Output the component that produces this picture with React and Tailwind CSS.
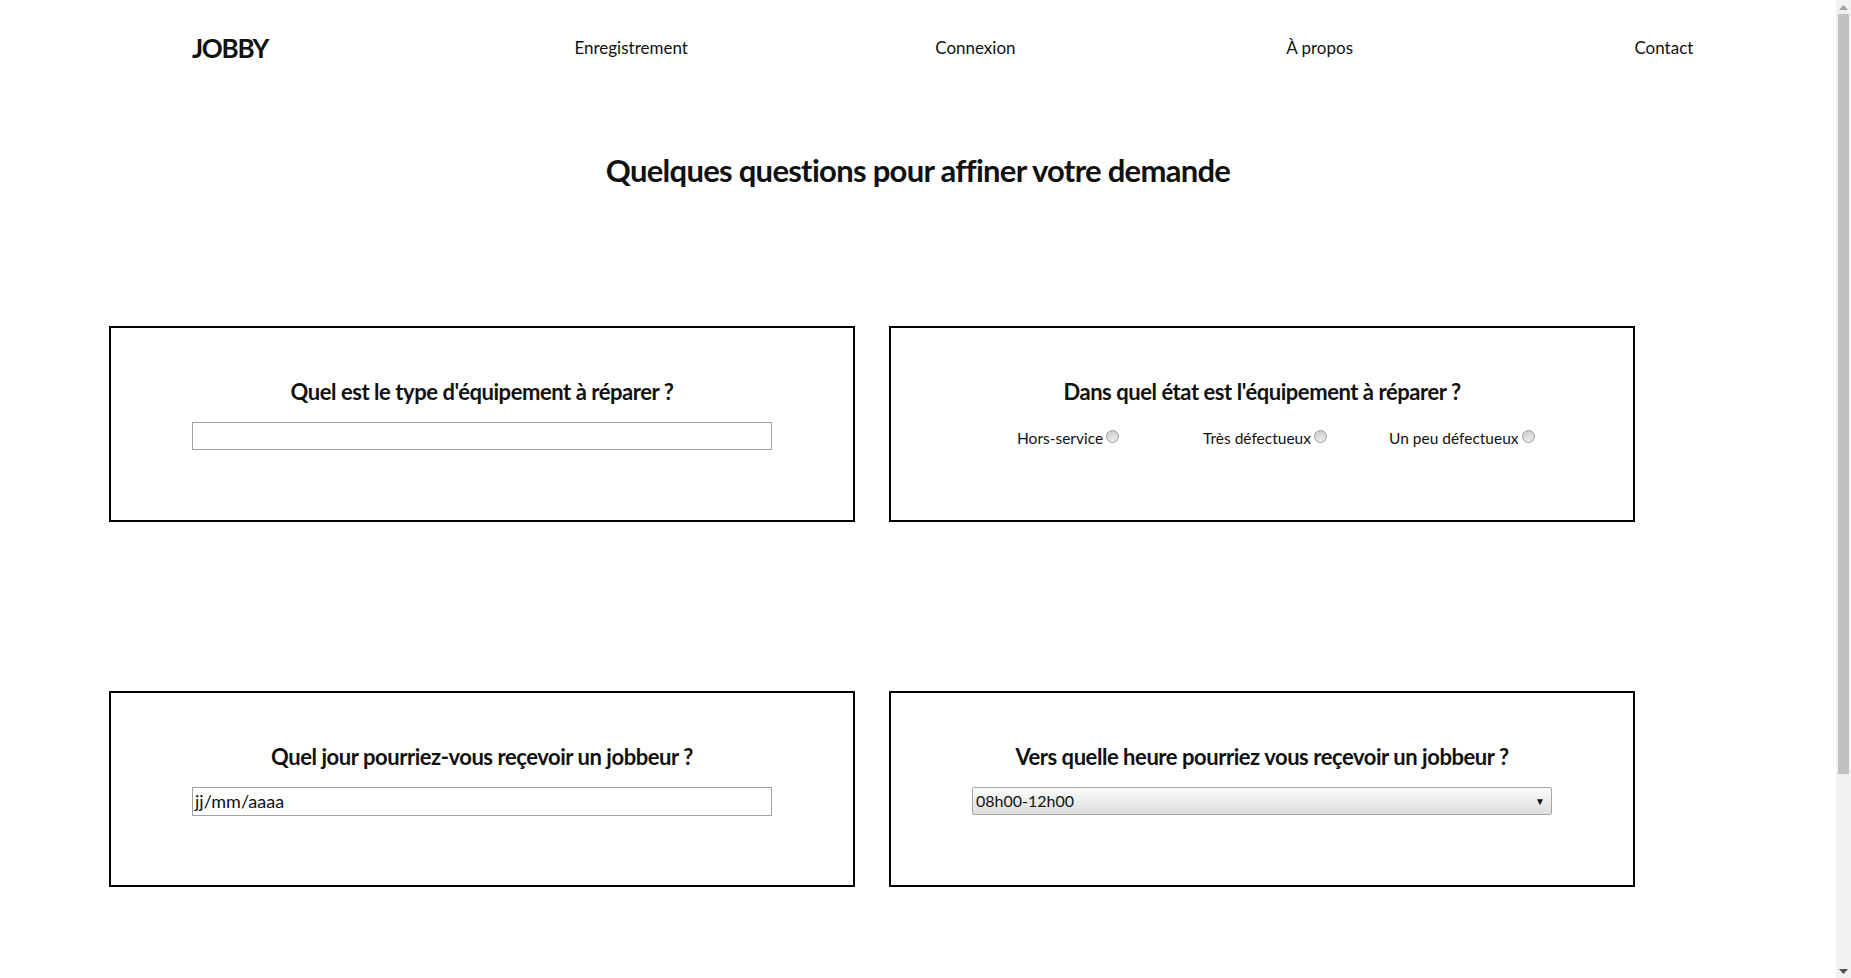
import React from "react";

const font = { fontFamily: "Lato, 'Open Sans', sans-serif" };

function Radio({ label }) {
  return (
    <label className="flex items-start w-[186px] shrink-0 text-[15.5px] leading-[20px] text-[#111]">
      <span>{label}</span>
      <span className="ml-[3px] mt-[2px] w-[13px] h-[13px] rounded-full border border-[#9a9a9a] bg-gradient-to-b from-[#cfcfcf] to-[#ececec] shrink-0" />
    </label>
  );
}

function Card({ title, children }) {
  return (
    <div className="w-[746px] h-[196px] border-2 border-black flex flex-col items-center pt-[48px]">
      <h2 className="text-[22px] leading-[32px] font-bold text-[#111] tracking-[-0.45px]">{title}</h2>
      {children}
    </div>
  );
}

function FakeScrollbar() {
  return (
    <div className="fixed top-0 right-0 w-[15px] h-screen bg-[#f1f1f1] flex flex-col items-center">
      <div className="h-[14px] flex items-center justify-center">
        <svg width="9" height="5" viewBox="0 0 9 5"><path d="M0 5 L4.5 0 L9 5 Z" fill="#a3a3a3" /></svg>
      </div>
      <div className="w-[11px] h-[760px] bg-[#c1c1c1]" />
      <div className="flex-1" />
      <div className="h-[14px] flex items-center justify-center">
        <svg width="9" height="5" viewBox="0 0 9 5"><path d="M0 0 L9 0 L4.5 5 Z" fill="#505050" /></svg>
      </div>
    </div>
  );
}

export default function App() {
  return (
    <div className="w-[1836px] bg-white min-h-[1222px]" style={font}>
      <header className="flex items-center h-[96px]">
        <div className="w-[25%] pl-[192px]">
          <span className="text-[26px] font-bold text-[#111] tracking-[-1.3px]">JOBBY</span>
        </div>
        <nav className="w-[75%] grid grid-cols-4 text-center text-[17px] text-[#111]">
          <a>Enregistrement</a>
          <a>Connexion</a>
          <a>À propos</a>
          <a>Contact</a>
        </nav>
      </header>

      <h1 className="mt-[54px] text-center text-[31px] leading-[40px] font-bold text-[#111] tracking-[-0.72px]">
        Quelques questions pour affiner votre demande
      </h1>

      <div className="mt-[136px] pl-[109px] flex flex-col gap-[169px]">
        <div className="flex gap-[34px]">
          <Card title="Quel est le type d'équipement à réparer ?">
            <input
              type="text"
              className="mt-[14px] w-[580px] h-[28px] border border-[#a0a0a0] outline-none px-[2px]"
            />
          </Card>
          <Card title="Dans quel état est l'équipement à réparer ?">
            <div className="mt-[20px] w-full flex pl-[126px]">
              <Radio label="Hors-service" />
              <Radio label="Très défectueux" />
              <Radio label="Un peu défectueux" />
            </div>
          </Card>
        </div>
        <div className="flex gap-[34px]">
          <Card title="Quel jour pourriez-vous reçevoir un jobbeur ?">
            <div className="mt-[14px] w-[580px] h-[29px] border border-[#a0a0a0] flex items-center px-[2px] text-[18px] text-[#111]">
              jj/mm/aaaa
            </div>
          </Card>
          <Card title="Vers quelle heure pourriez vous reçevoir un jobbeur ?">
            <div className="mt-[14px] w-[580px] h-[28px] border border-[#a6a6a6] rounded-[2px] bg-gradient-to-b from-[#fbfbfb] to-[#dedede] flex items-center justify-between pl-[3px] pr-[6px] text-[16px] text-[#111]">
              <span>08h00-12h00</span>
              <span className="text-[10px]">▼</span>
            </div>
          </Card>
        </div>
      </div>
      <FakeScrollbar />
    </div>
  );
}
